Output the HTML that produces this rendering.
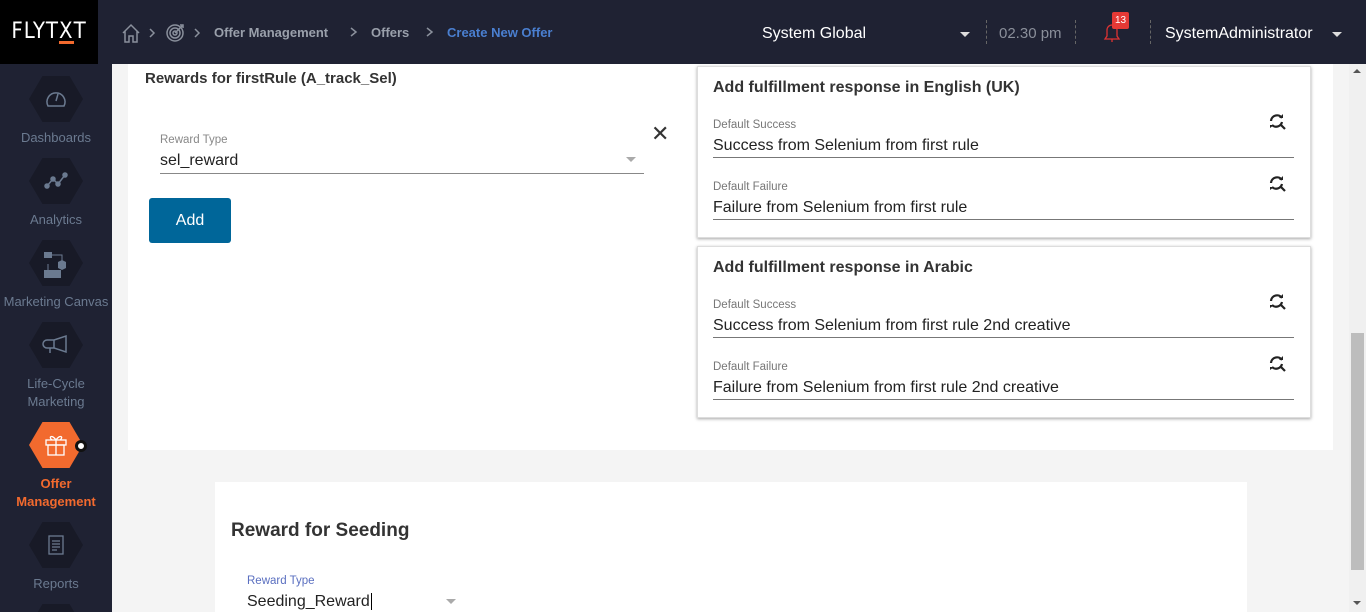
<!DOCTYPE html>
<html style="width:1366px;height:612px;overflow:hidden"><head><meta charset="utf-8"><style>
*{margin:0;padding:0;box-sizing:border-box}
body{width:1366px;height:612px;overflow:hidden;background:#f4f4f4;font-family:"Liberation Sans",sans-serif;position:relative;color:#222}
.a{position:absolute}
#hdr{left:0;top:0;width:1366px;height:64px;background:#1f2233}
#logo{left:0;top:0;width:98px;height:64px;background:#000;color:#fff;font-size:22px;letter-spacing:1px;text-align:center;line-height:64px;font-family:"DejaVu Sans Condensed","Liberation Sans Narrow","Liberation Sans",sans-serif}
#side{left:0;top:64px;width:112px;height:548px;background:#1f2233;overflow:hidden}
.hex{position:absolute;left:29px;width:54px;height:46px;background:#181a27;clip-path:polygon(25% 0,75% 0,100% 50%,75% 100%,25% 100%,0 50%)}
.lbl{position:absolute;left:0;width:112px;text-align:center;color:#6b7a90;font-size:13px;line-height:18px}
.crumb{color:#9aa0ab;font-size:13px;font-weight:bold;top:25px}
.card{background:#fff;box-shadow:0 1px 3px rgba(0,0,0,.35);border:1px solid #ddd}
.sm{font-size:11.5px;color:#777}
.val{font-size:16px;color:#222}
.line{height:1px;background:#777}
.h{font-weight:bold;font-size:16px;color:#333}
</style></head><body>
<div id="hdr" class="a"></div>
<div id="logo" class="a">FLYT<span style="border-bottom:3px solid #f26a2e;line-height:18px;display:inline-block">X</span>T</div>
<svg class="a" style="left:121px;top:22px" width="90" height="22" viewBox="0 0 90 22" fill="none" stroke="#8a909c" stroke-width="1.5">
<path d="M2 11 L10 3 L18 11 M4 9 V20 H8 V14 H12 V20 H16 V9"/>
<path d="M29 7 L33 11 L29 15"/>
<circle cx="54" cy="11" r="8"/><circle cx="54" cy="11" r="5"/><circle cx="54" cy="11" r="2"/><path d="M54 11 L61 4 M59 3 L62 3 L62 6"/>
<path d="M74 7 L78 11 L74 15"/>
</svg>
<div class="a crumb" style="left:214px">Offer Management</div>
<svg class="a" style="left:349px;top:26px" width="10" height="12" fill="none" stroke="#8a909c" stroke-width="1.5"><path d="M2 2 L7 6 L2 10"/></svg>
<div class="a crumb" style="left:371px">Offers</div>
<svg class="a" style="left:425px;top:26px" width="10" height="12" fill="none" stroke="#8a909c" stroke-width="1.5"><path d="M2 2 L7 6 L2 10"/></svg>
<div class="a crumb" style="left:447px;color:#4a7fd0">Create New Offer</div>
<div class="a" style="left:762px;top:25px;color:#fff;font-size:16px">System Global</div>
<div class="a" style="left:960px;top:32px;border:5px solid transparent;border-top:5px solid #ddd"></div>
<div class="a" style="left:986px;top:20px;height:24px;border-left:1px dashed #666"></div>
<div class="a" style="left:999px;top:25px;color:#8a8f9a;font-size:15px">02.30 pm</div>
<div class="a" style="left:1075px;top:20px;height:24px;border-left:1px dashed #666"></div>
<svg class="a" style="left:1100px;top:20px" width="24" height="24" viewBox="0 0 24 24" fill="none" stroke="#d33" stroke-width="1.3"><path d="M5 19 H19 L17 16 V10 A5 5 0 0 0 7 10 V16 Z M12 19 V22"/></svg>
<div class="a" style="left:1112px;top:12px;width:17px;height:17px;background:#e53935;color:#fff;font-size:10px;text-align:center;line-height:17px;border-radius:2px">13</div>
<div class="a" style="left:1150px;top:20px;height:24px;border-left:1px dashed #666"></div>
<div class="a" style="left:1165px;top:25px;color:#fff;font-size:16px">SystemAdministrator</div>
<div class="a" style="left:1332px;top:32px;border:5px solid transparent;border-top:5px solid #ddd"></div>

<div id="side" class="a">
<div class="hex" style="top:12px"></div>
<svg class="a" style="left:44px;top:24px" width="24" height="22" viewBox="0 0 24 22" fill="none" stroke="#6b7a90" stroke-width="1.5"><path d="M4 18 A9 9 0 1 1 20 18 Z M12 13 L14 6"/></svg>
<div class="lbl" style="top:65px">Dashboards</div>
<div class="hex" style="top:94px"></div>
<svg class="a" style="left:44px;top:106px" width="24" height="22" viewBox="0 0 24 22" fill="#6b7a90" stroke="#6b7a90" stroke-width="1.5"><path d="M3 16 L9 9 L14 14 L21 5" fill="none"/><circle cx="3" cy="16" r="2"/><circle cx="9" cy="9" r="2"/><circle cx="14" cy="14" r="2"/><circle cx="21" cy="5" r="2"/></svg>
<div class="lbl" style="top:147px">Analytics</div>
<div class="hex" style="top:176px"></div>
<svg class="a" style="left:42px;top:180px" width="32" height="38" viewBox="0 0 32 38"><rect x="2" y="8" width="8" height="6" fill="#6b7a90"/><path d="M10 11 H20 V20" stroke="#6b7a90" fill="none"/><polygon points="20,16 24,18 24,24 20,26 16,24 16,18" fill="#6b7a90"/><rect x="2" y="26" width="17" height="8" fill="#6b7a90"/><path d="M6 20 V26" stroke="#6b7a90"/></svg>
<div class="lbl" style="top:229px">Marketing Canvas</div>
<div class="hex" style="top:258px"></div>
<svg class="a" style="left:42px;top:270px" width="28" height="22" viewBox="0 0 28 22" fill="none" stroke="#6b7a90" stroke-width="1.5"><path d="M12 6 L24 2 V18 L12 14 Z M12 6 H5 A4 4 0 0 0 5 14 H12 M8 14 V19"/></svg>
<div class="lbl" style="top:311px">Life-Cycle<br>Marketing</div>
<div class="hex" style="top:358px;background:#f26a2e"></div>
<svg class="a" style="left:44px;top:370px" width="24" height="22" viewBox="0 0 24 22" fill="none" stroke="#fff" stroke-width="1.3"><rect x="2" y="6" width="20" height="5"/><rect x="4" y="11" width="16" height="10"/><path d="M12 6 V21 M12 6 C8 0 4 3 8 6 M12 6 C16 0 20 3 16 6"/></svg>
<div class="a" style="left:75px;top:376px;width:12px;height:12px;border-radius:50%;background:#fff;border:3px solid #111"></div>
<div class="lbl" style="top:411px;color:#f26a2e;font-weight:bold">Offer<br>Management</div>
<div class="hex" style="top:458px"></div>
<svg class="a" style="left:46px;top:470px" width="20" height="22" viewBox="0 0 20 22" fill="none" stroke="#6b7a90" stroke-width="1.3"><rect x="3" y="2" width="14" height="18"/><path d="M6 7 H14 M6 10 H14 M6 13 H14 M6 16 H11"/></svg>
<div class="lbl" style="top:511px">Reports</div>
<div class="hex" style="top:540px"></div>
</div>

<div class="a" style="left:128px;top:64px;width:1205px;height:386px;background:#fff"></div>
<div class="a h" style="left:145px;top:70px;font-size:15px">Rewards for firstRule (A_track_Sel)</div>
<div class="a sm" style="left:160px;top:134px;color:#888">Reward Type</div>
<div class="a val" style="left:160px;top:152px">sel_reward</div>
<div class="a" style="left:626px;top:157px;border:5px solid transparent;border-top:5px solid #aaa"></div>
<div class="a line" style="left:160px;top:173px;width:484px;background:#888"></div>
<div class="a" style="left:651px;top:121px;font-size:22px;color:#333">✕</div>
<div class="a" style="left:149px;top:198px;width:82px;height:45px;background:#006699;border-radius:3px;color:#fff;font-size:16px;text-align:center;line-height:45px">Add</div>

<div class="a card" style="left:697px;top:66px;width:614px;height:172px"></div>
<div class="a h" style="left:713px;top:79px">Add fulfillment response in English (UK)</div>
<div class="a sm" style="left:713px;top:119px">Default Success</div>
<div class="a val" style="left:713px;top:137px">Success from Selenium from first rule</div>
<div class="a line" style="left:713px;top:157px;width:581px"></div>
<div class="a sm" style="left:713px;top:181px">Default Failure</div>
<div class="a val" style="left:713px;top:199px">Failure from Selenium from first rule</div>
<div class="a line" style="left:713px;top:219px;width:581px"></div>

<div class="a card" style="left:697px;top:246px;width:614px;height:172px"></div>
<div class="a h" style="left:713px;top:259px">Add fulfillment response in Arabic</div>
<div class="a sm" style="left:713px;top:299px">Default Success</div>
<div class="a val" style="left:713px;top:317px">Success from Selenium from first rule 2nd creative</div>
<div class="a line" style="left:713px;top:337px;width:581px"></div>
<div class="a sm" style="left:713px;top:361px">Default Failure</div>
<div class="a val" style="left:713px;top:379px">Failure from Selenium from first rule 2nd creative</div>
<div class="a line" style="left:713px;top:399px;width:581px"></div>

<svg width="0" height="0" style="position:absolute"><defs><g id="ri"><path d="M3 8 A6 6 0 0 1 14 5 M14 9 A6 6 0 0 1 4 12" fill="none" stroke="#222" stroke-width="2.2"/><path d="M11 5 H15 V1 Z M2 12 V15 L6 12 Z" fill="#222"/><path d="M12 11 L17 16" stroke="#222" stroke-width="2.2"/></g></defs></svg>
<svg class="a" style="left:1268px;top:113px" width="18" height="18"><use href="#ri"/></svg>
<svg class="a" style="left:1268px;top:175px" width="18" height="18"><use href="#ri"/></svg>
<svg class="a" style="left:1268px;top:293px" width="18" height="18"><use href="#ri"/></svg>
<svg class="a" style="left:1268px;top:355px" width="18" height="18"><use href="#ri"/></svg>

<div class="a" style="left:215px;top:482px;width:1032px;height:130px;background:#fff;overflow:hidden">
<div class="a h" style="left:16px;top:38px;font-size:19px">Reward for Seeding</div>
<div class="a sm" style="left:32px;top:93px;color:#5a6fc0">Reward Type</div>
<div class="a val" style="left:32px;top:111px;line-height:17px">Seeding_Reward<span style="border-left:1px solid #000;margin-left:1px"></span></div>
<div class="a" style="left:231px;top:117px;border:5px solid transparent;border-top:5px solid #aaa"></div>
</div>

<div class="a" style="left:1349px;top:64px;width:17px;height:548px;background:#f0f0f0"></div>
<div class="a" style="left:1351px;top:333px;width:13px;height:237px;background:#bdbdbd"></div>
<div class="a" style="left:1353px;top:69px;border:4px solid transparent;border-bottom:4px solid #555;border-top:0"></div>
<div class="a" style="left:1353px;top:601px;border:4px solid transparent;border-top:4px solid #555;border-bottom:0"></div>
</body></html>
